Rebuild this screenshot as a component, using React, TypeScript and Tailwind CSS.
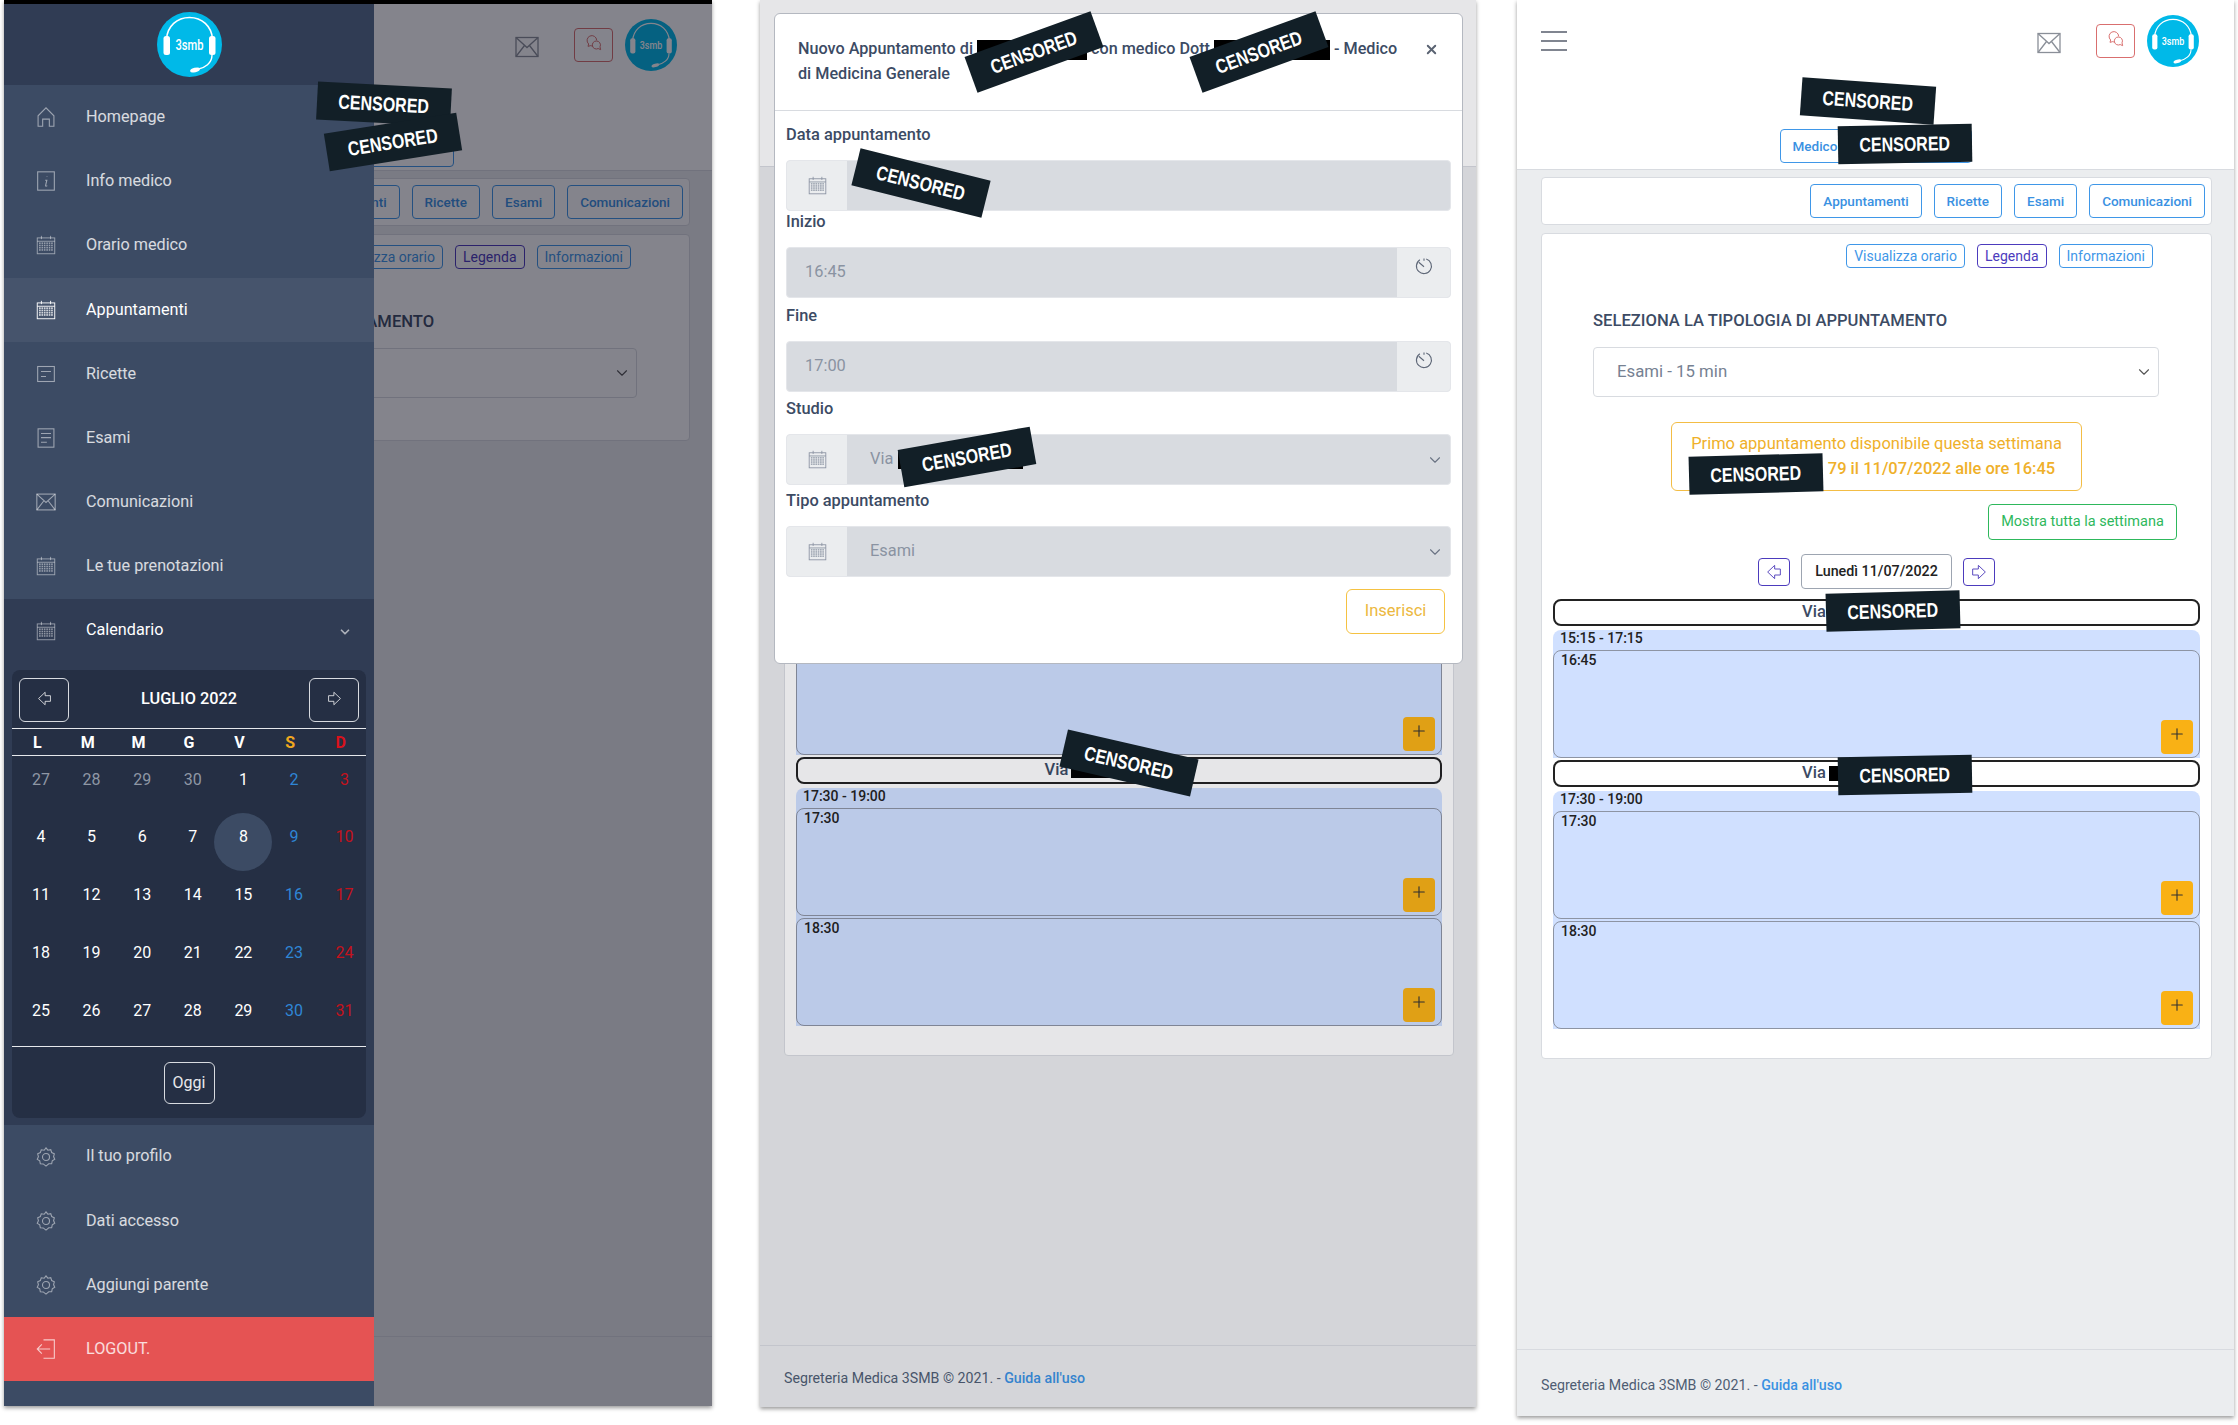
import React from 'react';
import { ChevronDown, Plus, X } from 'lucide-react';

// line icons in the style of the CoreUI set used by the app
function CalendarIcon({ className }: { className?: string }) {
  const dots = [];
  for (let r = 0; r < 4; r++) {
    for (let c = 0; c < 6; c++) {
      dots.push(<rect key={`${r}-${c}`} x={4.2 + c * 2.9} y={9.4 + r * 2.7} width="0.9" height="0.9" fill="currentColor" opacity="0.75" />);
    }
  }
  return (
    <svg viewBox="0 0 24 24" className={className} fill="none" stroke="currentColor" strokeWidth="1.1">
      <rect x="1.5" y="3.5" width="21" height="19" />
      <path d="M1.5 7.5h21M6.5 1v4M17.5 1v4" />
      {dots}
    </svg>
  );
}

function HomeIcon({ className }: { className?: string }) {
  return (
    <svg viewBox="0 0 24 24" className={className} fill="none" stroke="currentColor" strokeWidth="1.3">
      <path d="M2.5 23V10.5L12 1l9.5 9.5V23H16v-8.5H8V23z" />
    </svg>
  );
}

function InfoIcon({ className }: { className?: string }) {
  return (
    <svg viewBox="0 0 24 24" className={className} fill="none" stroke="currentColor" strokeWidth="1.3">
      <rect x="2" y="1" width="20" height="22" />
      <path d="M13.2 6.5v.8M11 11h2l-1.5 6.5c-.2 1 .8 1 2 0" />
    </svg>
  );
}

function NoteIcon({ className }: { className?: string }) {
  return (
    <svg viewBox="0 0 24 24" className={className} fill="none" stroke="currentColor" strokeWidth="1.3">
      <rect x="2" y="3" width="20" height="18" />
      <path d="M6 9h12M6 15h6" />
    </svg>
  );
}

function ExamIcon({ className }: { className?: string }) {
  return (
    <svg viewBox="0 0 24 24" className={className} fill="none" stroke="currentColor" strokeWidth="1.3">
      <rect x="2.5" y="1" width="19" height="22" />
      <path d="M6 6.5h12M6 11.5h12M6 17h7" />
    </svg>
  );
}

function MailIcon({ className }: { className?: string }) {
  return (
    <svg viewBox="0 0 24 24" className={className} fill="none" stroke="currentColor" strokeWidth="1.3">
      <rect x="1" y="2.5" width="22" height="19" />
      <path d="M1 2.5l11 10 11-10M1 21.5l8.5-11M23 21.5l-8.5-11" />
    </svg>
  );
}

function GearIcon({ className }: { className?: string }) {
  return (
    <svg viewBox="0 0 24 24" className={className} fill="none" stroke="currentColor" strokeWidth="1.3">
      <path d="M12 1l2.2 2.8 3.5-.6 1.1 3.4 3.200 1.500-.9 3.400 1.400 3.200-3 1.900-.7 3.500-3.500.1L12 23l-3.300-2.700-3.500-.1-.7-3.500-3-1.900 1.400-3.200-.9-3.400 3.200-1.500 1.100-3.400 3.500.6z" />
      <circle cx="12" cy="12" r="4.2" />
    </svg>
  );
}

function LogoutIcon({ className }: { className?: string }) {
  return (
    <svg viewBox="0 0 24 24" className={className} fill="none" stroke="currentColor" strokeWidth="1.3">
      <path d="M9 1h13v22H9M17 12H2M7 6.5L1.5 12 7 17.5" />
    </svg>
  );
}

function ClockIcon({ className }: { className?: string }) {
  return (
    <svg viewBox="0 0 24 24" className={className} fill="none" stroke="currentColor" strokeWidth="1.5">
      <path d="M15 2.6A10 10 0 1 1 6.5 3.7" />
      <path d="M5 7l7 6M12 2v3" />
    </svg>
  );
}

function ChatIcon({ className }: { className?: string }) {
  return (
    <svg viewBox="0 0 24 24" className={className} fill="none" stroke="currentColor" strokeWidth="1.5">
      <path d="M10 16.5c-1 0-2-.2-2.800-.6L3 17l1-3.500A7.200 7.200 0 1 1 16 8" />
      <path d="M15.5 9a6 6 0 1 0 2.8 11.300L22 22l-1-4.200A6 6 0 0 0 15.5 9z" />
    </svg>
  );
}

function ArrowIcon({ left, className }: { left?: boolean; className?: string }) {
  return (
    <svg viewBox="0 0 24 24" className={className} fill="none" stroke="currentColor" strokeWidth="1.5" style={left ? undefined : { transform: 'scaleX(-1)' }}>
      <path d="M2.5 12L13 2v5.5h8.5v9H13V22z" />
    </svg>
  );
}

function Logo({ className }: { className?: string }) {
  return (
    <svg viewBox="0 0 65 65" className={className}>
      <circle cx="32.5" cy="32.5" r="32.5" fill="#00b9e8" />
      <path d="M9.5 27C10.5 14 20 5.5 32.5 5.5S54.5 14 55.5 27" fill="none" stroke="#fff" strokeWidth="1.6" />
      <rect x="6.5" y="24" width="6.5" height="19" rx="2.5" fill="#fff" />
      <rect x="52" y="24" width="6.5" height="19" rx="2.5" fill="#fff" />
      <path d="M55 43c0 8-7 13-15 14.5" fill="none" stroke="#fff" strokeWidth="1.4" />
      <ellipse cx="38" cy="58" rx="5" ry="2.2" fill="#fff" transform="rotate(-15 38 58)" />
      <text x="32.5" y="38" textAnchor="middle" fill="#fff" fontSize="14" fontWeight="500" fontFamily="Roboto, sans-serif" textLength="28" lengthAdjust="spacingAndGlyphs">3smb</text>
    </svg>
  );
}

function Censored({ className }: { className: string }) {
  return (
    <div className={`absolute z-30 flex h-[38px] w-[134px] items-center justify-center bg-[#121f27] font-['Liberation_Sans',sans-serif] text-[20px] font-bold text-white ${className}`}>
      <span className="inline-block scale-x-[0.8]">CENSORED</span>
    </div>
  );
}

function NavButton({ label }: { label: string }) {
  return (
    <div className="flex h-[34px] items-center rounded-[4px] border-[1.5px] border-[#3f97e8] px-[12px] text-[13.5px] font-medium text-[#3a91e2]">
      {label}
    </div>
  );
}

function Pill({ label, purple }: { label: string; purple?: boolean }) {
  return (
    <div className={purple
      ? 'flex h-[24px] items-center rounded-[4px] border-[1.5px] border-[#4c3bbd] px-[7px] text-[14px] text-[#4c3bbd]'
      : 'flex h-[24px] items-center rounded-[4px] border-[1.5px] border-[#3f97e8] px-[7px] text-[14px] text-[#3f97e8]'}>
      {label}
    </div>
  );
}

function ViaBar({ className }: { className?: string }) {
  return (
    <div className={`flex h-[27px] items-center justify-center gap-[3px] rounded-[8px] border-2 border-[#222] bg-white text-[16.5px] font-medium text-[#3c4b64] ${className ?? ''}`}>
      Via
      <span className="h-[15px] w-[122px] bg-black" />
    </div>
  );
}

function Slot({ time, className }: { time: string; className?: string }) {
  return (
    <div className={`flex h-[108px] flex-col justify-between rounded-[8px] border-[1.5px] border-[#8d94a3] bg-[#d0e0ff] pb-[3px] pl-[7px] pr-[6px] ${className ?? ''}`}>
      <div className="text-[14px] leading-[18px] font-medium text-[#222]">{time}</div>
      <div className="flex justify-end">
        <div className="flex h-[34px] w-[32px] items-center justify-center rounded-[4px] bg-[#f9b115] pb-[6px]">
          <Plus className="h-[18px] w-[18px] text-[#333]" strokeWidth={1.5} />
        </div>
      </div>
    </div>
  );
}

function SlotGroup({ range, children }: { range: string; children: React.ReactNode }) {
  return (
    <div className="mt-[4px] rounded-t-[8px] bg-[#d0e0ff]">
      <div className="h-[20px] pl-[7px] text-[14px] leading-[16px] font-medium text-[#222]">{range}</div>
      {children}
    </div>
  );
}

// the page underneath: same page on all three phones, the first one stops after the select
function Page({ headerClass, footerClass, compact }: { headerClass: string; footerClass: string; compact?: boolean }) {
  return (
    <div className="flex h-full flex-col bg-[#ebedef]">
      <div className={`shrink-0 border-b border-[#d8dbe0] bg-white pt-[15px] ${headerClass}`}>
        <div className="flex h-[52px] items-center pl-[24px] pr-[35px]">
          <div className="flex w-[26px] flex-col gap-[6.5px]">
            <span className="h-[2.5px] bg-[#808590]" />
            <span className="h-[2.5px] bg-[#808590]" />
            <span className="h-[2.5px] bg-[#808590]" />
          </div>
          <div className="ml-auto flex items-center">
            <MailIcon className="mt-[4px] h-[24px] w-[24px] text-[#8a8f98]" />
            <div className="ml-[35px] flex h-[34px] w-[39px] items-center justify-center rounded-[4px] border-[1.5px] border-[#d96f6f] pb-[4px]">
              <ChatIcon className="h-[16px] w-[16px] text-[#d9706f]" />
            </div>
            <Logo className="ml-[12px] h-[52px] w-[52px]" />
          </div>
        </div>
        <div className="mt-[62px] flex justify-center">
          <div className="flex h-[34px] w-[192px] items-center rounded-[4px] border-[1.5px] border-[#3f97e8] px-[12px] text-[13.5px] font-medium text-[#3a91e2]">Medico</div>
        </div>
      </div>

      <div className="ml-[24px] mr-[22px] mt-[7px] flex h-[48px] shrink-0 items-center justify-end gap-[12px] rounded-[4px] border border-[#d8dbe0] bg-white pr-[6px]">
        <NavButton label="Appuntamenti" />
        <NavButton label="Ricette" />
        <NavButton label="Esami" />
        <NavButton label="Comunicazioni" />
      </div>

      <div className={`ml-[24px] mr-[22px] mt-[8px] rounded-[4px] border border-[#d8dbe0] bg-white px-[11px] pt-[10px] ${compact ? 'pb-[42px]' : 'pb-[29px]'}`}>
        <div className="flex justify-end gap-[12px] pr-[47px]">
          <Pill label="Visualizza orario" />
          <Pill label="Legenda" purple />
          <Pill label="Informazioni" />
        </div>
        <div className="mt-[41px] pl-[40px] text-[16.6px] leading-[24px] font-medium text-[#3c4b64]">SELEZIONA LA TIPOLOGIA DI APPUNTAMENTO</div>
        <div className="ml-[40px] mr-[41px] mt-[14px] flex h-[50px] items-center justify-between rounded-[4px] border-[1.5px] border-[#d8dbe0] bg-white pl-[23px] pr-[5px] text-[16.8px] text-[#768192]">
          Esami - 15 min
          <ChevronDown className="h-[18px] w-[18px] text-[#555]" strokeWidth={1.5} />
        </div>

        {!compact && (
          <>
            <div className="mx-auto mt-[25px] flex h-[69px] w-[411px] flex-col justify-center rounded-[6px] border-[1.5px] border-[#f3bd45] pb-[2px] text-center text-[16.5px] leading-[25px] text-[#efb02a]">
              <div>Primo appuntamento disponibile questa settimana</div>
              <div className="font-medium"><span className="inline-block w-[130px]" />79 il 11/07/2022 alle ore 16:45</div>
            </div>
            <div className="mt-[13px] flex justify-end pr-[23px]">
              <div className="flex h-[36px] w-[189px] items-center justify-center rounded-[4px] border-[1.5px] border-[#2eb85c] text-[14.5px] text-[#2eb85c]">Mostra tutta la settimana</div>
            </div>
            <div className="mt-[14px] flex items-center justify-center gap-[11px]">
              <div className="flex h-[28px] w-[32px] items-center justify-center rounded-[4px] border-[1.5px] border-[#4c3bbd]">
                <ArrowIcon left className="h-[16px] w-[16px] text-[#5c4cc0]" />
              </div>
              <div className="flex h-[35px] w-[151px] items-center justify-center rounded-[4px] border-[1.5px] border-[#9da5b1] text-[14.3px] font-medium text-[#222]">Lunedì 11/07/2022</div>
              <div className="flex h-[28px] w-[32px] items-center justify-center rounded-[4px] border-[1.5px] border-[#4c3bbd]">
                <ArrowIcon className="h-[16px] w-[16px] text-[#5c4cc0]" />
              </div>
            </div>
            <ViaBar className="mt-[10px]" />
            <SlotGroup range="15:15 - 17:15">
              <Slot time="16:45" />
            </SlotGroup>
            <ViaBar className="mt-[2px]" />
            <SlotGroup range="17:30 - 19:00">
              <Slot time="17:30" />
              <Slot time="18:30" className="mt-[2px]" />
            </SlotGroup>
          </>
        )}
      </div>

      <div className={`mt-auto flex shrink-0 items-center border-t-[1.5px] border-[#d8dbe0] pl-[24px] pt-[5px] text-[14.2px] text-[#4f5d73] ${footerClass}`}>
        <span className="whitespace-pre">Segreteria Medica 3SMB © 2021. - </span>
        <span className="font-medium text-[#3a91e2]">Guida all'uso</span>
      </div>
    </div>
  );
}

function MenuItem({ icon, label, active, danger, dark }: { icon: React.ReactNode; label: string; active?: boolean; danger?: boolean; dark?: boolean }) {
  let bg = 'bg-[#3c4b64]';
  if (active) bg = 'bg-[#46546c]';
  if (danger) bg = 'bg-[#e55353]';
  if (dark) bg = 'bg-[#303c54]';
  return (
    <div className={`flex h-[64.2px] items-center pl-[32px] text-[16.2px] ${bg} ${active || dark ? 'text-white' : 'text-white/80'}`}>
      <span className={active ? 'text-white' : danger ? 'text-white/70' : 'text-white/50'}>{icon}</span>
      <span className="ml-[30px]">{label}</span>
    </div>
  );
}

const iconClass = 'h-[20px] w-[20px]';

function CalendarWidget() {
  const heads = [
    { t: 'L', c: 'text-white' },
    { t: 'M', c: 'text-white' },
    { t: 'M', c: 'text-white' },
    { t: 'G', c: 'text-white' },
    { t: 'V', c: 'text-white' },
    { t: 'S', c: 'text-[#f0a81f]' },
    { t: 'D', c: 'text-[#d8121c]' },
  ];
  const days = [27, 28, 29, 30, 1, 2, 3, 4, 5, 6, 7, 8, 9, 10, 11, 12, 13, 14, 15, 16, 17, 18, 19, 20, 21, 22, 23, 24, 25, 26, 27, 28, 29, 30, 31];
  return (
    <div className="mx-[8px] mt-[7px] h-[448px] rounded-[8px] bg-[#252f44] pt-[8px] text-white">
      <div className="flex h-[44px] items-center justify-between px-[7px]">
        <div className="flex h-[44px] w-[50px] items-center justify-center rounded-[6px] border-[1.5px] border-[#d8dbe0]">
          <ArrowIcon left className="mb-[3px] h-[15px] w-[15px] text-white/80" />
        </div>
        <div className="text-[16.3px] font-medium">LUGLIO 2022</div>
        <div className="flex h-[44px] w-[50px] items-center justify-center rounded-[6px] border-[1.5px] border-[#d8dbe0]">
          <ArrowIcon className="mb-[3px] h-[15px] w-[15px] text-white/80" />
        </div>
      </div>
      <div className="mt-[6px] grid h-[28px] grid-cols-7 items-center border-y-[1.5px] border-[#e6e8ec] pt-[2px] text-center text-[16px] font-bold">
        {heads.map((h, i) => <div key={i} className={h.c}>{h.t}</div>)}
      </div>
      <div className="grid grid-cols-[repeat(7,50.6px)] border-b-[1.5px] border-[#e6e8ec] pb-[1px]">
        {days.map((d, i) => {
          let color = 'text-white';
          if (i < 4) color = 'text-[#8f97a5]';
          else if (i % 7 === 5) color = 'text-[#2f86d6]';
          else if (i % 7 === 6) color = 'text-[#c4121c]';
          return (
            <div key={i} className={`flex h-[57.8px] w-[58px] shrink-0 justify-center rounded-full pt-[14px] text-[16px] leading-[20px] ${color} ${i === 11 ? 'bg-[#3c4b64]' : ''}`}>
              {d}
            </div>
          );
        })}
      </div>
      <div className="mt-[15px] flex justify-center">
        <div className="flex h-[42px] w-[51px] items-center justify-center rounded-[6px] border-[1.5px] border-[#d8dbe0] text-[16px] text-white/90">Oggi</div>
      </div>
    </div>
  );
}

function Sidebar() {
  return (
    <div className="absolute inset-y-0 left-0 z-20 flex w-[370px] flex-col bg-[#3c4b64]">
      <div className="flex h-[81px] shrink-0 items-start justify-center bg-[#303c54] pt-[8px]">
        <Logo className="h-[65px] w-[65px]" />
      </div>
      <MenuItem icon={<HomeIcon className={iconClass} />} label="Homepage" />
      <MenuItem icon={<InfoIcon className={iconClass} />} label="Info medico" />
      <MenuItem icon={<CalendarIcon className={iconClass} />} label="Orario medico" />
      <MenuItem icon={<CalendarIcon className={iconClass} />} label="Appuntamenti" active />
      <MenuItem icon={<NoteIcon className={iconClass} />} label="Ricette" />
      <MenuItem icon={<ExamIcon className={iconClass} />} label="Esami" />
      <MenuItem icon={<MailIcon className={iconClass} />} label="Comunicazioni" />
      <MenuItem icon={<CalendarIcon className={iconClass} />} label="Le tue prenotazioni" />
      <div className="h-[526px] shrink-0 bg-[#303c54]">
        <div className="relative">
          <MenuItem icon={<CalendarIcon className={iconClass} />} label="Calendario" dark />
          <ChevronDown className="absolute right-[22px] top-[26px] h-[14px] w-[14px] text-white/60" strokeWidth={3} />
        </div>
        <CalendarWidget />
      </div>
      <MenuItem icon={<GearIcon className={iconClass} />} label="Il tuo profilo" />
      <MenuItem icon={<GearIcon className={iconClass} />} label="Dati accesso" />
      <MenuItem icon={<GearIcon className={iconClass} />} label="Aggiungi parente" />
      <MenuItem icon={<LogoutIcon className={iconClass} />} label="LOGOUT." danger />
    </div>
  );
}

function Field({ label, className, children }: { label: string; className?: string; children: React.ReactNode }) {
  return (
    <div className={className}>
      <div className="h-[22px] text-[16.4px] leading-[22px] font-medium text-[#3c4b64]">{label}</div>
      <div className="mt-[14px] flex h-[51px] overflow-hidden rounded-[4px] border border-[#e4e6ea] bg-[#d8dbe0] text-[16.4px] text-[#8a93a2]">
        {children}
      </div>
    </div>
  );
}

function AddonLeft() {
  return (
    <div className="flex w-[60px] shrink-0 items-center justify-center bg-[#ebedef]">
      <CalendarIcon className="h-[19px] w-[19px] text-[#8a93a2]" />
    </div>
  );
}

function AddonClock() {
  return (
    <div className="ml-auto flex w-[53px] shrink-0 justify-center bg-[#ebedef] pt-[9px]">
      <ClockIcon className="h-[18px] w-[18px] text-[#5f6878]" />
    </div>
  );
}

function Modal() {
  return (
    <div className="absolute left-[14px] top-[13px] z-20 h-[651px] w-[689px] rounded-[6px] border border-[#b4b8c0] bg-white">
      <div className="relative h-[97px] border-b-[1.5px] border-[#d8dbe0] pl-[23px] pt-[22px] text-[16.2px] leading-[25px] font-medium whitespace-nowrap text-[#3c4b64]">
        Nuovo Appuntamento di <span className="inline-block h-[20px] w-[110px] bg-black align-middle" /> con medico Dott <span className="inline-block h-[20px] w-[116px] bg-black align-middle" /> - Medico
        <br />
        di Medicina Generale
        <X className="absolute right-[23px] top-[28px] h-[15px] w-[15px] text-[#5a6372]" strokeWidth={3} />
      </div>
      <div className="px-[11px] pt-[13px]">
        <Field label="Data appuntamento"><AddonLeft /></Field>
        <Field label="Inizio">
          <div className="flex items-center pl-[18px]">16:45</div>
          <AddonClock />
        </Field>
        <Field label="Fine" className="mt-[7px]">
          <div className="flex items-center pl-[18px]">17:00</div>
          <AddonClock />
        </Field>
        <Field label="Studio" className="mt-[6px]">
          <AddonLeft />
          <div className="flex items-center gap-[5px] pl-[23px]">Via<span className="h-[18px] w-[125px] bg-black" /></div>
          <ChevronDown className="ml-auto mr-[6px] h-[18px] w-[18px] self-center text-[#6b7484]" strokeWidth={1.5} />
        </Field>
        <Field label="Tipo appuntamento" className="mt-[5px]">
          <AddonLeft />
          <div className="flex items-center pl-[23px]">Esami</div>
          <ChevronDown className="ml-auto mr-[6px] h-[18px] w-[18px] self-center text-[#6b7484]" strokeWidth={1.5} />
        </Field>
        <div className="mt-[12px] flex justify-end pr-[6px]">
          <div className="flex h-[45px] w-[99px] items-center justify-center rounded-[6px] border-[1.5px] border-[#f5c242] text-[16.5px] text-[#ecb840]">Inserisci</div>
        </div>
      </div>
    </div>
  );
}

export default function App() {
  return (
    <div className="flex h-[1425px] w-[2238px] items-start overflow-hidden bg-white pl-[4px] font-['Roboto',sans-serif]">
      {/* menu aperto */}
      <div className="relative h-[1406px] w-[708px] shrink-0 overflow-hidden border-t-[4px] border-black shadow-[0_2px_4px_rgba(0,0,0,0.4)]">
        <Page headerClass="h-[167px]" footerClass="h-[70px]" compact />
        <div className="absolute inset-0 z-10 bg-[rgba(10,10,25,0.5)]" />
        <Sidebar />
        <Censored className="left-[313px] top-[81px] rotate-[3deg]" />
        <Censored className="left-[322px] top-[119px] rotate-[-9deg]" />
      </div>

      {/* nuovo appuntamento */}
      <div className="relative ml-[48px] h-[1407px] w-[716px] shrink-0 overflow-hidden shadow-[0_2px_4px_rgba(0,0,0,0.4)]">
        <Page headerClass="h-[167px]" footerClass="h-[62px]" />
        <div className="absolute inset-0 z-10 bg-[rgba(10,10,25,0.1)]" />
        <Modal />
        <Censored className="left-[207px] top-[33px] rotate-[-20deg]" />
        <Censored className="left-[432px] top-[33px] rotate-[-20deg]" />
        <Censored className="left-[94px] top-[164px] rotate-[14deg]" />
        <Censored className="left-[140px] top-[438px] rotate-[-10deg]" />
        <Censored className="left-[302px] top-[744px] rotate-[13deg]" />
      </div>

      {/* pagina */}
      <div className="relative ml-[41px] h-[1416px] w-[717px] shrink-0 overflow-hidden shadow-[0_2px_4px_rgba(0,0,0,0.4)]">
        <Page headerClass="h-[170px]" footerClass="h-[67px]" />
        <Censored className="left-[284px] top-[82px] rotate-[4deg]" />
        <Censored className="left-[321px] top-[125px] rotate-[-1deg]" />
        <Censored className="left-[172px] top-[455px] rotate-[-1.5deg]" />
        <Censored className="left-[309px] top-[592px] rotate-[-1.5deg]" />
        <Censored className="left-[321px] top-[756px] rotate-[-1deg]" />
      </div>
    </div>
  );
}
